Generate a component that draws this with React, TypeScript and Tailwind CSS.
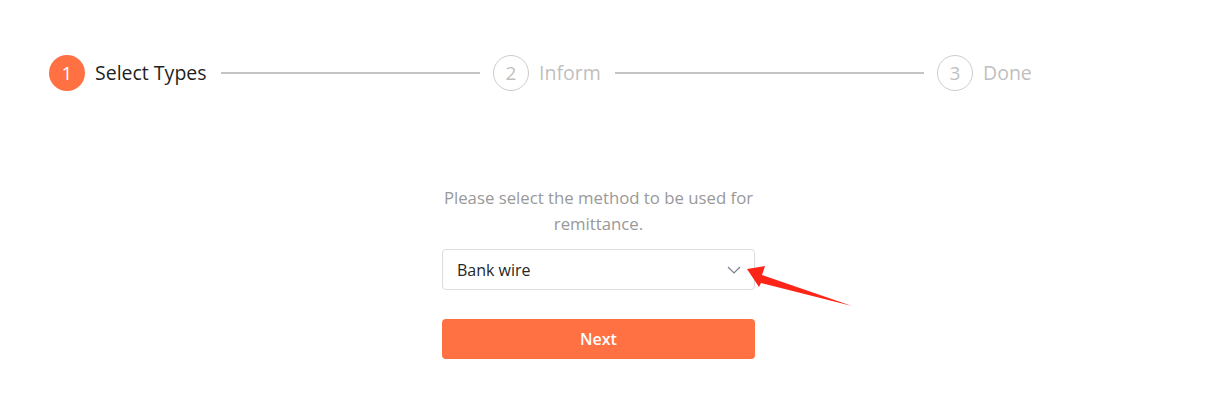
const steps = [
  { n: 1, title: 'Select Types', active: true },
  { n: 2, title: 'Inform', active: false },
  { n: 3, title: 'Done', active: false },
];

function Step({ n, title, active, last }: { n: number; title: string; active: boolean; last: boolean }) {
  return (
    <div className={last ? 'flex items-center flex-none' : 'flex items-center w-[444px] flex-none'}>
      <div
        className={
          active
            ? 'w-[36px] h-[36px] rounded-full bg-[#ff7043] text-white flex items-center justify-center text-[19px]'
            : 'w-[36px] h-[36px] rounded-full border border-[#cccccc] text-[#bfbfbf] flex items-center justify-center text-[19px]'
        }
      >
        {n}
      </div>
      <div className={active ? 'ml-[10px] text-[19.5px] text-[#1f1f1f]' : 'ml-[10px] text-[19.5px] text-[#bfbfbf]'}>
        {title}
      </div>
      {!last && <div className="flex-1 h-[2px] bg-[#c4c4c4] ml-[14px] mr-[13px]" />}
    </div>
  );
}

export default function App() {
  return (
    <div className="relative w-[1212px] h-[404px] bg-white font-['Open_Sans',sans-serif]">
      {/* Steps */}
      <div className="flex pt-[55px] pl-[49px]">
        {steps.map((s, i) => (
          <Step key={s.n} {...s} last={i === steps.length - 1} />
        ))}
      </div>

      {/* Form */}
      <div className="ml-[442px] mt-[94px] w-[313px] flex flex-col">
        <p className="text-center text-[16.75px] leading-[26px] text-[#999999]">
          Please select the method to be used for remittance.
        </p>
        <div className="mt-[12px] h-[41px] rounded-[4px] border border-[#dddddd] flex items-center justify-between pl-[14px] pr-[13px]">
          <span className="text-[16px] text-[#262626]">Bank wire</span>
          <svg width="14" height="8" viewBox="0 0 14 8" fill="none">
            <path d="M1 1l6 6 6-6" stroke="#7a7f8f" strokeWidth="1.2" />
          </svg>
        </div>
        <button className="mt-[29px] h-[40px] rounded-[4px] bg-[#ff7043] text-white text-[16px] font-semibold">
          Next
        </button>
      </div>

      {/* Annotation arrow */}
      <svg className="absolute left-0 top-0 pointer-events-none" width="1212" height="404">
        <polygon
          points="747,269 765,266 762,275 852,306 761,283 759,287"
          fill="#fd2418"
        />
      </svg>
    </div>
  );
}
